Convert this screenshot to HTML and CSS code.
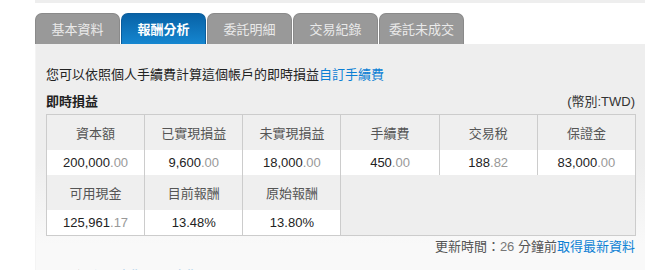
FILE: index.html
```html
<!DOCTYPE html>
<html lang="zh-Hant">
<head>
  <meta charset="UTF-8">
  <title>報酬分析</title>
  <link rel="stylesheet" href="styles.css">
</head>
<body>
  <div class="wrap">
    <div class="topbar"></div>
    <ul class="tabs">
      <li class="tab">基本資料</li>
      <li class="tab active">報酬分析</li>
      <li class="tab">委託明細</li>
      <li class="tab">交易紀錄</li>
      <li class="tab">委託未成交</li>
    </ul>
    <div class="panel">
      <p class="intro">您可以依照個人手續費計算這個帳戶的即時損益<a href="#">自訂手續費</a></p>
      <div class="section-head">
        <h2>即時損益</h2>
        <span class="currency">(幣別:TWD)</span>
      </div>
      <table class="pl">
        <tr class="label">
          <td>資本額</td>
          <td>已實現損益</td>
          <td>未實現損益</td>
          <td>手續費</td>
          <td>交易稅</td>
          <td>保證金</td>
        </tr>
        <tr class="value">
          <td>200,000<span class="dec">.00</span></td>
          <td>9,600<span class="dec">.00</span></td>
          <td>18,000<span class="dec">.00</span></td>
          <td>450<span class="dec">.00</span></td>
          <td>188<span class="dec">.82</span></td>
          <td>83,000<span class="dec">.00</span></td>
        </tr>
        <tr class="label">
          <td>可用現金</td>
          <td>目前報酬</td>
          <td>原始報酬</td>
          <td class="blank" colspan="3" rowspan="2"></td>
        </tr>
        <tr class="value">
          <td>125,961<span class="dec">.17</span></td>
          <td>13.48%</td>
          <td>13.80%</td>
        </tr>
      </table>
      <p class="updated">更新時間：<span class="mins">26</span> 分鐘前<a href="#">取得最新資料</a></p>
      <p class="note">報酬率(<a href="#">含手續費/扣手續費</a>)</p>
    </div>
  </div>
</body>
</html>
```

FILE: styles.css
```css
body {
  margin: 0;
  background: #fff;
  font-family: "Liberation Sans", "Noto Sans CJK TC", sans-serif;
  font-size: 13px;
  color: #333;
}
a {
  color: #0b7fd4;
  text-decoration: none;
}
.wrap {
  width: 610px;
  margin-left: 35px;
}
.topbar {
  height: 3px;
  background: #eee;
}
.tabs {
  display: flex;
  gap: 1px;
  list-style: none;
  margin: 10px 0 0;
  padding: 0;
}
.tab {
  width: 83px;
  height: 30px;
  line-height: 31px;
  text-align: center;
  color: #eaeaea;
  background: #999;
  border: 1px solid #8a8a8a;
  border-bottom: 0;
  border-radius: 7px 7px 0 0;
}
.tab.active {
  color: #fff;
  font-weight: bold;
  background: linear-gradient(#0862a6, #1586d0);
  border-color: #0a5d9c;
}
.panel {
  background: linear-gradient(#eee 0, #eee 120px, #f9f9f9 200px);
  border-left: 1px solid #f4f4f4;
  padding: 22px 10px 0 10px;
  height: 204px;
  overflow: hidden;
}
.intro {
  margin: 0;
  line-height: 18px;
  color: #222;
}
.section-head {
  display: flex;
  justify-content: space-between;
  align-items: baseline;
  margin-top: 9px;
  line-height: 18px;
}
.section-head h2 {
  margin: 0;
  font-size: 13px;
  color: #222;
}
.currency {
  color: #333;
}
.pl {
  width: 590px;
  border-collapse: collapse;
  border: 1px solid #ccc;
  margin-top: 3px;
  table-layout: fixed;
}
.pl td {
  border-left: 1px solid #ccc;
  text-align: center;
  padding: 0;
}
.label td {
  height: 35px;
  background: #efefef;
  color: #555;
}
.value td {
  height: 25px;
  background: #fff;
  color: #222;
}
.pl td.blank {
  background: #eee;
}
.dec {
  color: #999;
}
.updated {
  margin: 2px 0 0;
  text-align: right;
  line-height: 18px;
  color: #555;
}
.mins {
  color: #777;
}
.note {
  margin: 10px 0 0;
  font-weight: bold;
  color: #222;
}
```
